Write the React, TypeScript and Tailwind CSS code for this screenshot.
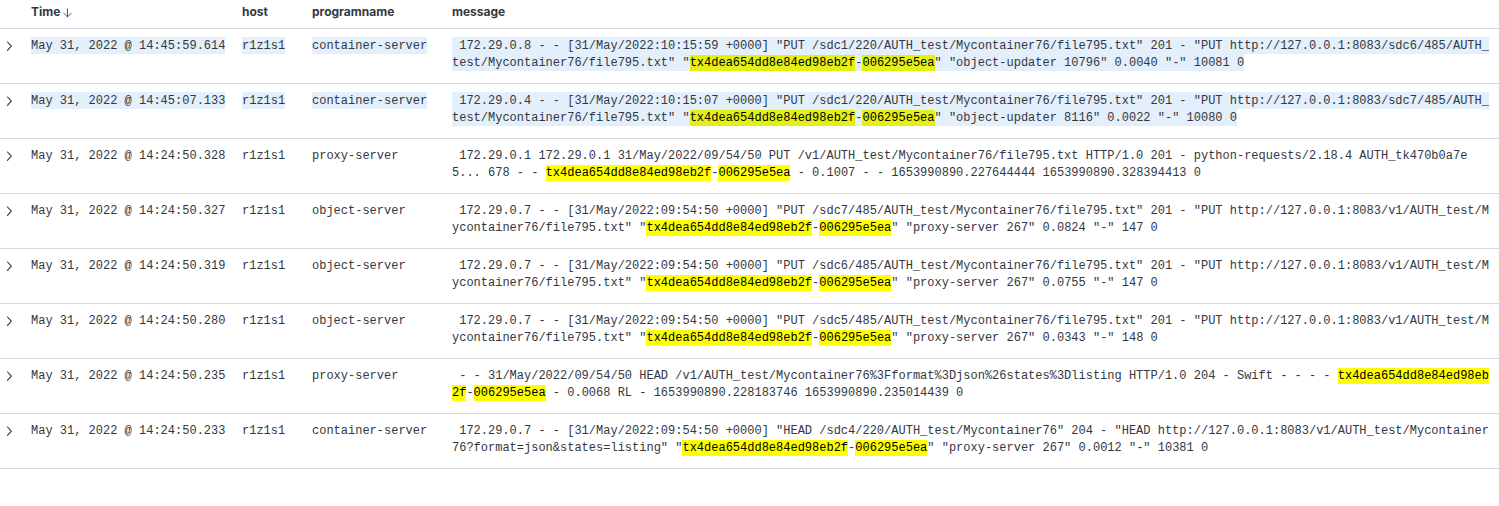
import { Fragment } from "react";
import clsx from "clsx";

interface LogEntry {
  time: string;
  host: string;
  program: string;
  message: string;
  selected?: boolean;
}

// Search terms highlighted inside the message column
const TERMS = /(tx4dea654dd8e84ed98eb2f|006295e5ea)/;

const ENTRIES: LogEntry[] = [
  {
    time: "May 31, 2022 @ 14:45:59.614",
    host: "r1z1s1",
    program: "container-server",
    message:
      ' 172.29.0.8 - - [31/May/2022:10:15:59 +0000] "PUT /sdc1/220/AUTH_test/Mycontainer76/file795.txt" 201 - "PUT http://127.0.0.1:8083/sdc6/485/AUTH_test/Mycontainer76/file795.txt" "tx4dea654dd8e84ed98eb2f-006295e5ea" "object-updater 10796" 0.0040 "-" 10081 0',
    selected: true,
  },
  {
    time: "May 31, 2022 @ 14:45:07.133",
    host: "r1z1s1",
    program: "container-server",
    message:
      ' 172.29.0.4 - - [31/May/2022:10:15:07 +0000] "PUT /sdc1/220/AUTH_test/Mycontainer76/file795.txt" 201 - "PUT http://127.0.0.1:8083/sdc7/485/AUTH_test/Mycontainer76/file795.txt" "tx4dea654dd8e84ed98eb2f-006295e5ea" "object-updater 8116" 0.0022 "-" 10080 0',
    selected: true,
  },
  {
    time: "May 31, 2022 @ 14:24:50.328",
    host: "r1z1s1",
    program: "proxy-server",
    message:
      " 172.29.0.1 172.29.0.1 31/May/2022/09/54/50 PUT /v1/AUTH_test/Mycontainer76/file795.txt HTTP/1.0 201 - python-requests/2.18.4 AUTH_tk470b0a7e5... 678 - - tx4dea654dd8e84ed98eb2f-006295e5ea - 0.1007 - - 1653990890.227644444 1653990890.328394413 0",
  },
  {
    time: "May 31, 2022 @ 14:24:50.327",
    host: "r1z1s1",
    program: "object-server",
    message:
      ' 172.29.0.7 - - [31/May/2022:09:54:50 +0000] "PUT /sdc7/485/AUTH_test/Mycontainer76/file795.txt" 201 - "PUT http://127.0.0.1:8083/v1/AUTH_test/Mycontainer76/file795.txt" "tx4dea654dd8e84ed98eb2f-006295e5ea" "proxy-server 267" 0.0824 "-" 147 0',
  },
  {
    time: "May 31, 2022 @ 14:24:50.319",
    host: "r1z1s1",
    program: "object-server",
    message:
      ' 172.29.0.7 - - [31/May/2022:09:54:50 +0000] "PUT /sdc6/485/AUTH_test/Mycontainer76/file795.txt" 201 - "PUT http://127.0.0.1:8083/v1/AUTH_test/Mycontainer76/file795.txt" "tx4dea654dd8e84ed98eb2f-006295e5ea" "proxy-server 267" 0.0755 "-" 147 0',
  },
  {
    time: "May 31, 2022 @ 14:24:50.280",
    host: "r1z1s1",
    program: "object-server",
    message:
      ' 172.29.0.7 - - [31/May/2022:09:54:50 +0000] "PUT /sdc5/485/AUTH_test/Mycontainer76/file795.txt" 201 - "PUT http://127.0.0.1:8083/v1/AUTH_test/Mycontainer76/file795.txt" "tx4dea654dd8e84ed98eb2f-006295e5ea" "proxy-server 267" 0.0343 "-" 148 0',
  },
  {
    time: "May 31, 2022 @ 14:24:50.235",
    host: "r1z1s1",
    program: "proxy-server",
    message:
      " - - 31/May/2022/09/54/50 HEAD /v1/AUTH_test/Mycontainer76%3Fformat%3Djson%26states%3Dlisting HTTP/1.0 204 - Swift - - - - tx4dea654dd8e84ed98eb2f-006295e5ea - 0.0068 RL - 1653990890.228183746 1653990890.235014439 0",
  },
  {
    time: "May 31, 2022 @ 14:24:50.233",
    host: "r1z1s1",
    program: "container-server",
    message:
      ' 172.29.0.7 - - [31/May/2022:09:54:50 +0000] "HEAD /sdc4/220/AUTH_test/Mycontainer76" 204 - "HEAD http://127.0.0.1:8083/v1/AUTH_test/Mycontainer76?format=json&states=listing" "tx4dea654dd8e84ed98eb2f-006295e5ea" "proxy-server 267" 0.0012 "-" 10381 0',
  },
];

function ChevronIcon() {
  return (
    <svg width="10" height="16" viewBox="0 0 10 16" fill="none" stroke="currentColor" aria-hidden="true">
      <path d="M3.5 4 7.3 8.2 3.5 12.4" strokeWidth="1.1" strokeLinecap="round" strokeLinejoin="round" />
    </svg>
  );
}

function SortDownIcon() {
  return (
    <svg width="12" height="12" viewBox="0 0 12 12" fill="none" stroke="currentColor" aria-hidden="true">
      <path d="M6.5 3v7.8M2.8 7.2l3.7 3.7 3.7-3.7" strokeLinecap="round" strokeLinejoin="round" />
    </svg>
  );
}

function CellText({ text, selected }: { text: string; selected?: boolean }) {
  return (
    <span className={clsx(selected && "bg-[#e3effa] pt-[2px] pb-px")}>
      {text.split(TERMS).map((part, i) =>
        TERMS.test(part) ? (
          <mark key={i} className={clsx("py-px text-black", selected ? "bg-[#e4f014]" : "bg-[#ffff00]")}>
            {part}
          </mark>
        ) : (
          <Fragment key={i}>{part}</Fragment>
        ),
      )}
    </span>
  );
}

function LogRow({ entry }: { entry: LogEntry }) {
  const cell = "border-b border-[#d3dae6] px-1 pt-[9px] pb-[11px]";

  return (
    <tr className="align-top">
      <td className={cell}>
        <button type="button" aria-label="Toggle row details" className="block">
          <ChevronIcon />
        </button>
      </td>
      <td className={clsx(cell, "whitespace-nowrap")}>
        <CellText text={entry.time} selected={entry.selected} />
      </td>
      <td className={cell}>
        <CellText text={entry.host} selected={entry.selected} />
      </td>
      <td className={cell}>
        <CellText text={entry.program} selected={entry.selected} />
      </td>
      {/* Leading space in the raw log line is kept */}
      <td className={clsx(cell, "break-all whitespace-pre-wrap")}>
        <CellText text={entry.message} selected={entry.selected} />
      </td>
    </tr>
  );
}

export default function App() {
  const head = "border-b border-[#d3dae6] px-1 pt-1 pb-2 font-bold";

  return (
    <main className="min-h-screen bg-white text-[#343741]">
      <table className="w-full table-fixed border-separate border-spacing-0 text-left font-['Liberation_Mono',monospace] text-[12px] leading-[17px]">
        <colgroup>
          <col className="w-[27px]" />
          <col className="w-[211px]" />
          <col className="w-[70px]" />
          <col className="w-[140px]" />
          <col />
        </colgroup>
        <thead className="font-['Inter',sans-serif] leading-4">
          <tr>
            <td className={head} />
            <th scope="col" className={head}>
              <span className="flex items-center gap-px">
                Time
                <button type="button" aria-label="Sort by time" className="text-[#0071c2]">
                  <SortDownIcon />
                </button>
              </span>
            </th>
            <th scope="col" className={head}>host</th>
            <th scope="col" className={head}>programname</th>
            <th scope="col" className={head}>message</th>
          </tr>
        </thead>
        <tbody>
          {ENTRIES.map((entry) => (
            <LogRow key={entry.time} entry={entry} />
          ))}
        </tbody>
      </table>
    </main>
  );
}
